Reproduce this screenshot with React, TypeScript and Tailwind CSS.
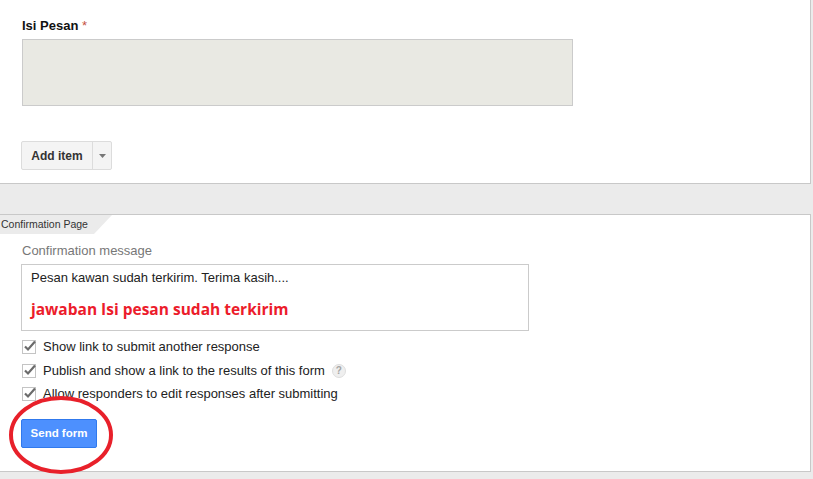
import React from "react";

function Check() {
  return (
    <svg width="16" height="16" viewBox="0 0 16 16" className="shrink-0">
      <rect x="0.5" y="1.5" width="13" height="13" fill="#fff" stroke="#c4c4c4" />
      <path d="M3 7.5 L6 10.5 L13 2.5" fill="none" stroke="#6b6b6b" strokeWidth="2.2" />
    </svg>
  );
}

export default function App() {
  return (
    <div
      className="relative w-[813px] h-[479px] overflow-hidden bg-[#ebebeb] flex flex-col"
      style={{ fontFamily: '"Liberation Sans", Arial, sans-serif' }}
    >
      {/* top card */}
      <div className="w-[811px] h-[184px] shrink-0 bg-white border-r border-b border-[#c8c8c8] pl-[22px] pt-[18px] flex flex-col items-start">
        <div className="text-[13px] leading-[16px] font-bold text-[#111]">
          Isi Pesan <span className="font-normal text-[#c5523f]">*</span>
        </div>
        <div className="mt-[5px] w-[551px] h-[67px] bg-[#e9e9e3] border border-[#cbcbcb]" />
        <div className="mt-[35px] -ml-px flex h-[29px] rounded-[2px] border border-[#dcdcdc] bg-[#f4f4f4]">
          <div className="w-[70px] flex items-center justify-center text-[12px] font-bold text-[#333]">Add item</div>
          <div className="w-[19px] border-l border-[#dcdcdc] flex items-center justify-center">
            <svg width="7" height="4" viewBox="0 0 7 4">
              <path d="M0 0 L7 0 L3.5 4 Z" fill="#777" />
            </svg>
          </div>
        </div>
      </div>

      <div className="h-[30px] shrink-0" />

      {/* second card */}
      <div className="relative w-[811px] h-[258px] shrink-0 bg-white border-t border-r border-b border-[#c8c8c8] flex flex-col items-start">
        <div className="flex h-[19px]">
          <div className="bg-[#ebebeb] pl-px pr-[6px] text-[10.5px] leading-[19px] text-[#333]">Confirmation Page</div>
          <svg width="18" height="19" viewBox="0 0 18 19">
            <path d="M0 0 L18 0 L0 19 Z" fill="#ebebeb" />
          </svg>
        </div>
        <div className="ml-[22px] mt-[9px] text-[13px] leading-[16px] text-[#777]">Confirmation message</div>
        <div className="ml-[21px] mt-[5px] w-[508px] h-[67px] border border-[#cbcbcb] pl-[9px] pt-[5px]">
          <div className="text-[13px] leading-[16px] text-[#222]">Pesan kawan sudah terkirim. Terima kasih....</div>
          <div
            className="mt-[13px] text-[15.5px] leading-[20px] font-bold text-[#ec1c2b]"
            style={{ fontFamily: '"Open Sans", sans-serif' }}
          >
            jawaban Isi pesan sudah terkirim
          </div>
        </div>
        <div className="ml-[22px] mt-[8px] flex flex-col gap-[7.5px] text-[13px] leading-[16px] text-[#222]">
          <div className="flex items-center gap-[5px]">
            <Check />
            <span>Show link to submit another response</span>
          </div>
          <div className="flex items-center gap-[5px]">
            <Check />
            <span>Publish and show a link to the results of this form</span>
            <span className="ml-[2px] w-[14px] h-[14px] rounded-full bg-[#efefef] border border-[#dedede] flex items-center justify-center text-[10px] font-bold text-[#a5a5a5]">
              ?
            </span>
          </div>
          <div className="flex items-center gap-[5px]">
            <Check />
            <span>Allow responders to edit responses after submitting</span>
          </div>
        </div>
        <div className="ml-[21px] mt-[17px] w-[76px] h-[29px] rounded-[2px] border border-[#3079ed] bg-[#4d90fe] flex items-center justify-center text-[11.5px] font-bold text-white">
          Send form
        </div>
      </div>

      {/* red annotation ellipse */}
      <svg className="absolute left-0 top-0 pointer-events-none" width="813" height="479">
        <ellipse cx="61" cy="435" rx="50" ry="37" fill="none" stroke="#e8202a" strokeWidth="4" />
      </svg>
    </div>
  );
}
